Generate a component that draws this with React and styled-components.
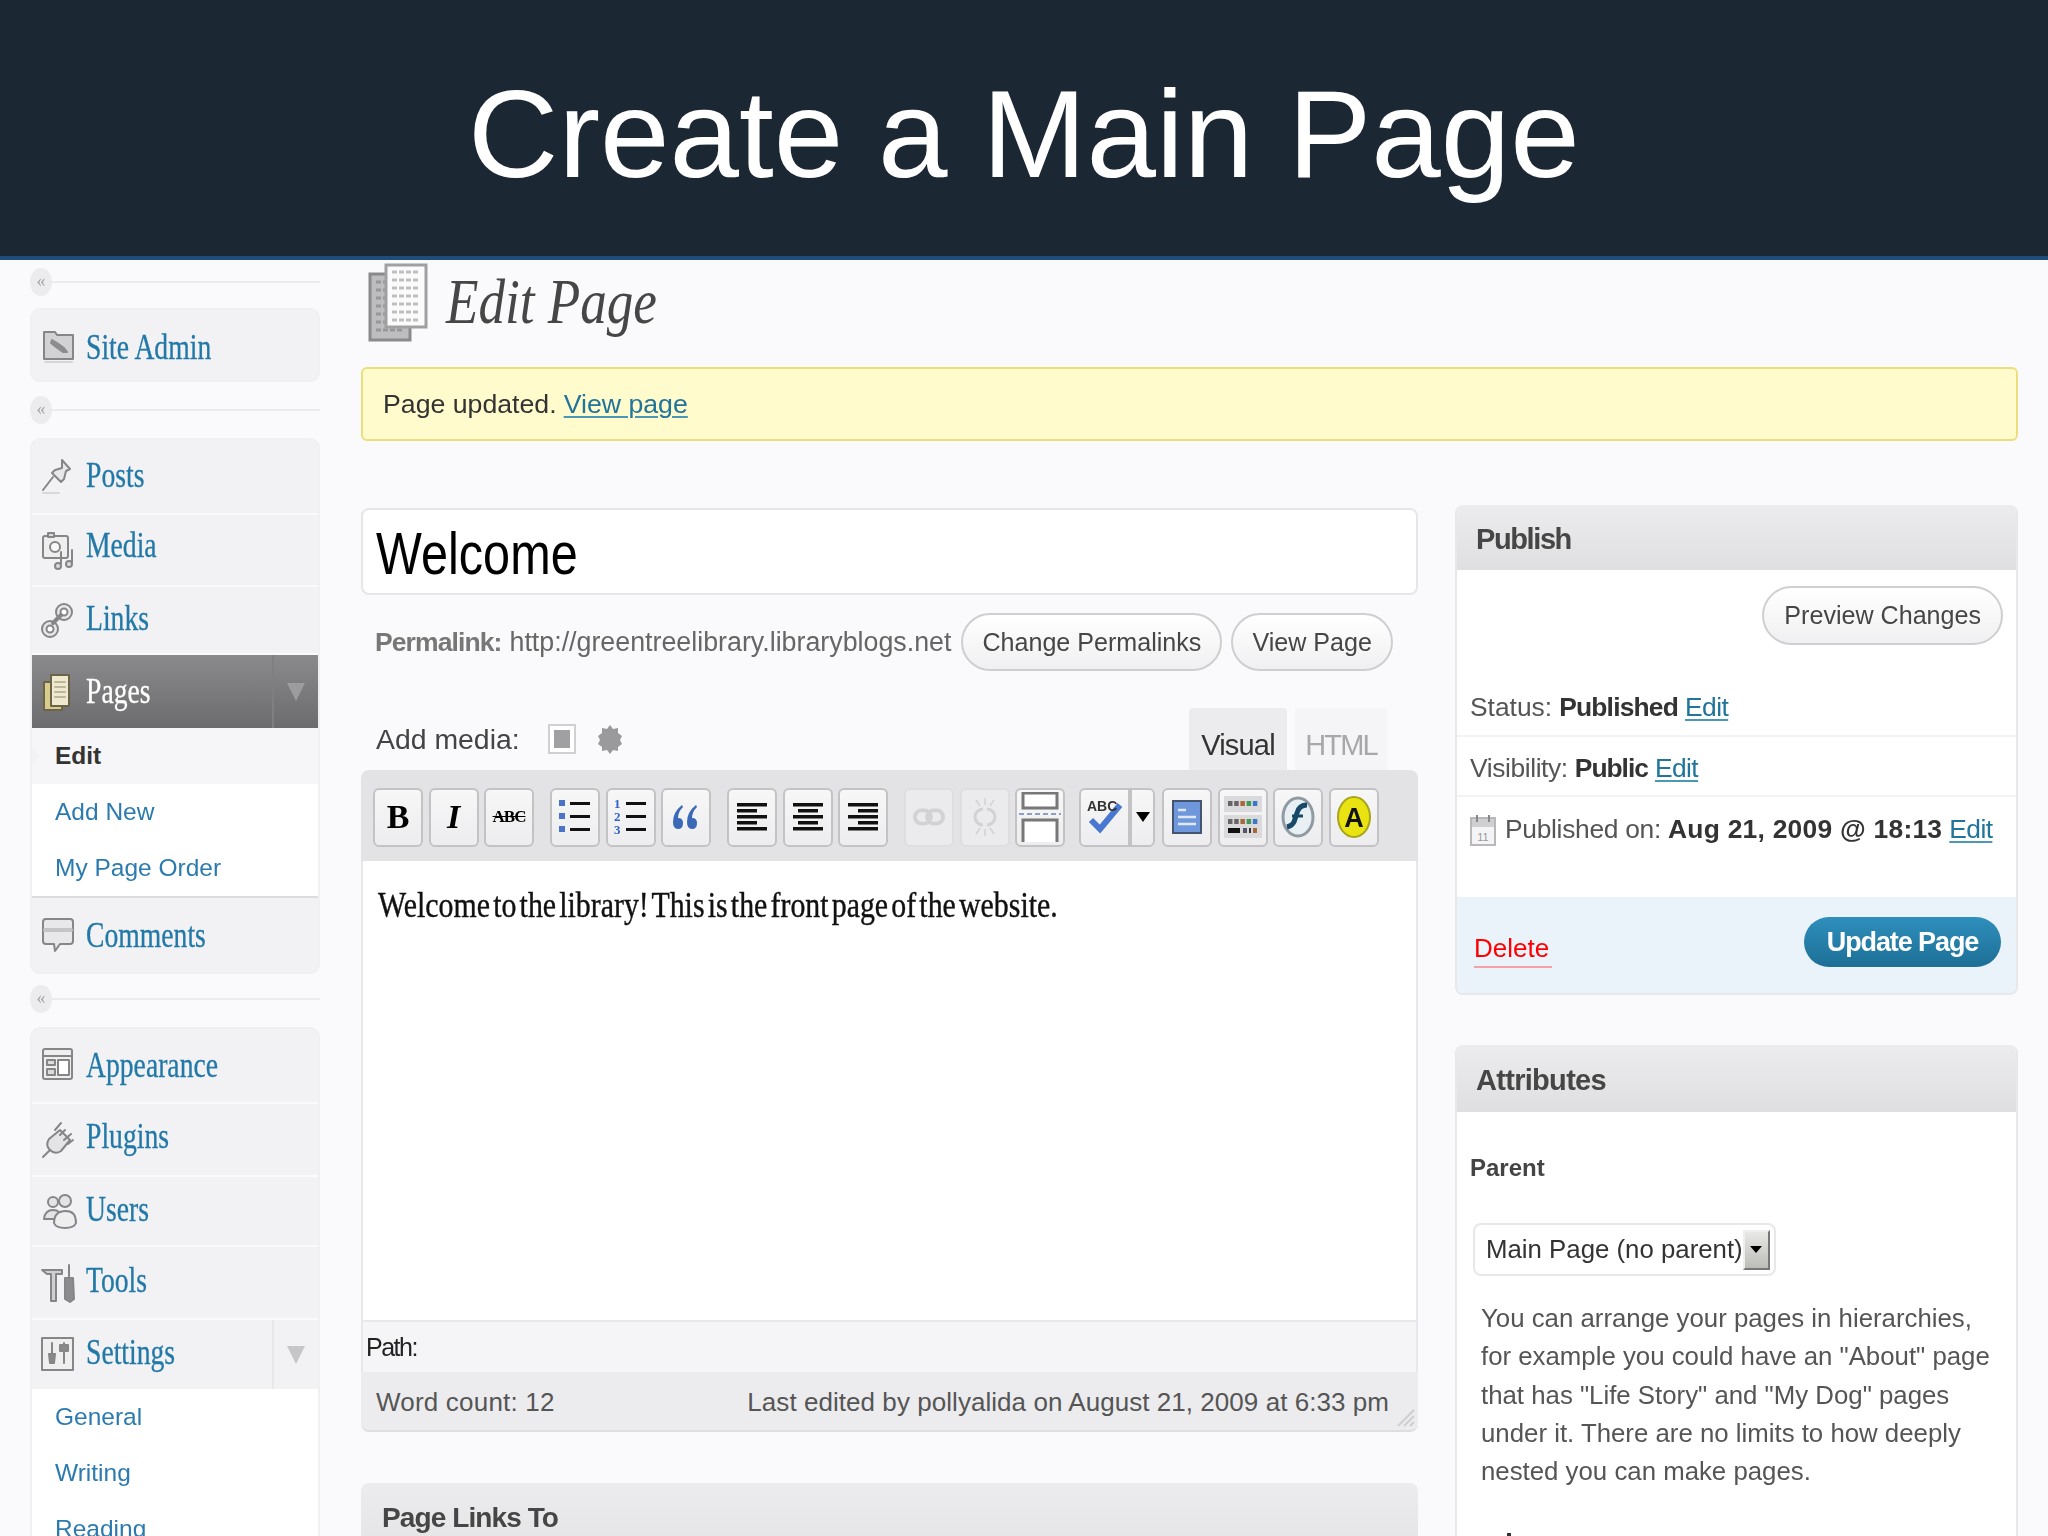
import React from "react";
import styled, { createGlobalStyle } from "styled-components";

const GlobalStyle = createGlobalStyle`
html, body {
    margin: 0;
    padding: 0;
    background: #fafafc;
}
* { box-sizing: border-box; }
`

const Slide = styled.div`
width: 2048px;
height: 1536px;
overflow: hidden;
display: flex;
flex-direction: column;
font-family: "Liberation Sans", Arial, sans-serif;
color: #333;
background: #fafafc;
`
const Banner = styled.header`
height: 260px;
flex: none;
display: flex;
justify-content: center;
align-items: flex-start;
padding-top: 62px;
background: #1b2733;
border-bottom: 4px solid #1f4d7a;
`
const BannerTitle = styled.h1`
margin: 0;
font-size: 125px;
line-height: 144px;
font-weight: 400;
color: #fff;
`
const Workspace = styled.div`
flex: 1;
display: flex;
min-height: 0;
filter: blur(0.55px);
`

// sidebar
const Sidebar = styled.nav`
width: 361px;
flex: none;
padding: 0 41px 0 30px;
`
const Fold = styled.div`
height: 44px;
margin: ${p => p.$top || 0}px 0 ${p => p.$bottom || 0}px;
display: flex;
align-items: center;
`
const FoldDot = styled.span`
width: 22px;
height: 28px;
flex: none;
border-radius: 50%;
background: #ececee;
color: #a5a5a5;
font: 18px/26px "Liberation Serif", serif;
text-align: center;
`
const FoldLine = styled.span`
flex: 1;
height: 2px;
background: #ececee;
`
const MenuGroup = styled.ul`
list-style: none;
margin: 0;
padding: 0;
border: 2px solid #f0f0f2;
border-radius: 10px;
background: #f2f2f4;
overflow: hidden;
`
const MenuRow = styled.li`
height: ${p => p.$h}px;
display: flex;
align-items: center;
padding-left: 8px;
border-top: ${p => (p.$first ? "none" : "2px solid #fafafb")};
background: ${p => (p.$active ? "linear-gradient(#8a8a8c, #6c6c6e)" : "transparent")};
`
const MenuIconBox = styled.span`
width: 46px;
height: 40px;
flex: none;
`
const MenuLabel = styled.span`
flex: 1;
display: block;
font: 35px/44px "Liberation Serif", serif;
-webkit-text-stroke: 0.3px;
color: ${p => (p.$active ? "#fff" : "#2279a8")};
transform: translateY(${p => p.$shift || 0}px) scaleX(0.79);
transform-origin: left center;
white-space: nowrap;
`
const MenuCaret = styled.span`
width: 46px;
align-self: stretch;
flex: none;
display: flex;
align-items: center;
justify-content: center;
border-left: 2px solid ${p => (p.$active ? "#7f7f81" : "#e8e8ea")};

&::after {
    content: '';
    border-left: 9px solid transparent;
    border-right: 9px solid transparent;
    border-top: 18px solid ${p => (p.$active ? "#9c9c9e" : "#c6c6c8")};
}
`
const SubMenu = styled.ul`
list-style: none;
margin: 0;
padding: 0;
background: #fff;
border-bottom: ${p => (p.$closed ? "2px solid #dcdcde" : "none")};
`
const SubItem = styled.li`
height: 56px;
display: flex;
align-items: center;
padding-left: 23px;
position: relative;
font-size: 24.5px;
font-weight: ${p => (p.$current ? 700 : 400)};
color: ${p => (p.$current ? "#333" : "#2b7bb0")};
background: ${p => (p.$current ? "#f6f6f8" : "transparent")};

${p => p.$current && `
&::before {
    content: '';
    position: absolute;
    left: 0;
    top: 20px;
    border-top: 8px solid transparent;
    border-bottom: 8px solid transparent;
    border-left: 8px solid #f2f2f4;
}`}
`

// main column
const Main = styled.main`
flex: 1;
padding-right: 30px;
min-width: 0;
`
const PageHead = styled.div`
height: 107px;
display: flex;
align-items: flex-start;
padding-left: 7px;
`
const PageIcon = styled.svg`
flex: none;
margin-top: 2px;
`
const PageTitle = styled.h2`
margin: 4px 0 0 18px;
font: italic 400 64px/76px "Liberation Serif", serif;
color: #464646;
transform: scaleX(0.83);
transform-origin: left center;
white-space: nowrap;
`
const Notice = styled.div`
height: 74px;
display: flex;
align-items: center;
padding-left: 20px;
font-size: 26.7px;
color: #333;
background: #fffbcc;
border: 2px solid #eadf7c;
border-radius: 6px;
`
const TextLink = styled.a`
color: #21759b;
text-decoration: underline;
text-decoration-color: ${p => p.$line || "#4a98b5"};
text-decoration-thickness: 2px;
text-underline-offset: 3px;
margin-left: ${p => (p.$gap ? "7px" : "0")};
`
const MetaEdit = styled(TextLink)`
letter-spacing: -0.6px;
`
const Columns = styled.div`
display: flex;
gap: 37px;
margin-top: 64px;
`
const LeftColumn = styled.div`
width: 1057px;
flex: none;
padding-top: 3px;
`
const RightColumn = styled.aside`
flex: 1;
min-width: 0;
`
const TitleField = styled.div`
height: 87px;
display: flex;
align-items: center;
padding: 5px 0 0 13px;
background: #fff;
border: 2px solid #e6e6e8;
border-radius: 8px;
`
const TitleText = styled.span`
display: block;
font-size: 60px;
line-height: 70px;
color: #000;
transform: scaleX(0.81);
transform-origin: left center;
`
const PermalinkRow = styled.div`
height: 58px;
margin-top: 18px;
display: flex;
align-items: center;
padding-left: 14px;
font-size: 26.8px;
color: #666;
white-space: nowrap;
`
const PermalinkLabel = styled.strong`
margin-right: 8px;
font-size: 26.5px;
letter-spacing: -0.9px;
color: #777;
`
const PillButton = styled.div`
height: ${p => p.$h || 58}px;
margin-left: ${p => p.$left || 0}px;
padding: 0 ${p => p.$pad || 19}px;
display: flex;
align-items: center;
flex: none;
font-size: 25.1px;
color: #464646;
background: linear-gradient(#fff, #f0f0f2);
border: 2px solid #cfcfd1;
border-radius: 30px;
`
const MediaRow = styled.div`
height: 62px;
margin-top: 37px;
display: flex;
align-items: center;
padding-left: 15px;
`
const MediaLabel = styled.span`
font-size: 28.4px;
color: #444;
margin-right: 28px;
`
const MediaImage = styled.span`
width: 28px;
height: 30px;
display: flex;
align-items: center;
justify-content: center;
background: #fff;
border: 2px solid #d0d0d2;

&::after {
    content: '';
    width: 16px;
    height: 18px;
    background: #a0a0a2;
}
`
const MediaGear = styled.svg`
margin-left: 20px;
`
const Tabs = styled.div`
margin-left: auto;
align-self: stretch;
display: flex;
align-items: flex-end;
padding: 0 31px 0 0;
gap: 8px;
`
const Tab = styled.span`
height: 62px;
width: ${p => p.$w}px;
display: flex;
align-items: flex-end;
justify-content: center;
padding-bottom: 8px;
font-size: 29px;
letter-spacing: ${p => (p.$on ? "-0.8px" : "-1.8px")};
color: ${p => (p.$on ? "#333" : "#a8a8aa")};
background: ${p => (p.$on ? "#ececee" : "#f5f5f7")};
border-radius: 4px 4px 0 0;
`
const Toolbar = styled.div`
height: 91px;
display: flex;
align-items: center;
padding: 3px 0 0 12px;
background: #e3e3e5;
border-radius: 8px 8px 0 0;
`
const ToolGroup = styled.div`
display: flex;
gap: 5.5px;
margin-right: ${p => p.$gap ?? 16}px;
`
const ToolButton = styled.span`
width: ${p => p.$w || 50}px;
height: 59px;
display: flex;
align-items: center;
justify-content: center;
background: ${p => (p.$off ? "#ebebed" : "linear-gradient(#f7f7f8, #ededef)")};
border: 2px solid ${p => (p.$off ? "#dedee0" : "#c3c3c5")};
border-radius: ${p => p.$radius || "6px"};
`
const SplitTool = styled.div`
display: flex;
margin-right: 7px;
`
const ToolLetter = styled.span`
font-family: "Liberation Serif", serif;
font-size: ${p => p.$size || 32}px;
font-weight: 700;
font-style: ${p => (p.$italic ? "italic" : "normal")};
text-decoration: ${p => (p.$strike ? "line-through" : "none")};
letter-spacing: ${p => p.$track || 0}px;
color: ${p => p.$color || "#000"};
`
const EditorArea = styled.div`
height: 459px;
padding: 23px 0 0 15px;
background: #fff;
border: solid #e8e8ea;
border-width: 0 2px;
`
const EditorText = styled.p`
margin: 0;
font: 35px/44px "Liberation Serif", serif;
-webkit-text-stroke: 0.4px;
word-spacing: -5px;
color: #111;
white-space: nowrap;
transform: scaleX(0.853);
transform-origin: left center;
`
const PathBar = styled.div`
height: 52px;
display: flex;
align-items: center;
padding-left: 3px;
font-size: 25px;
letter-spacing: -1.5px;
color: #222;
background: #f5f5f7;
border: solid #e8e8ea;
border-width: 2px 2px 0;
`
const StatusBar = styled.div`
height: 60px;
display: flex;
align-items: center;
justify-content: space-between;
padding: 3px 29px 0 15px;
font-size: 26px;
color: #555;
background: #ececee;
border-bottom: 2px solid #dedee0;
border-radius: 0 0 8px 8px;
position: relative;
`
const Grip = styled.svg`
position: absolute;
right: 2px;
bottom: 2px;
`
const StatusCount = styled.span`
letter-spacing: 0.2px;
`
const StatusEdited = styled.span`
letter-spacing: 0.05px;
`
const LinksBox = styled.div`
height: 90px;
margin-top: 51px;
padding: 19px 0 0 21px;
font-size: 28px;
font-weight: 700;
letter-spacing: -0.9px;
color: #464646;
background: linear-gradient(#ececee, #e2e2e4);
border-radius: 8px 8px 0 0;
`

// right column
const Panel = styled.section`
margin-bottom: ${p => p.$gap || 0}px;
min-height: ${p => p.$min || 0}px;
background: #fff;
border: solid #e8e8ea;
border-width: 0 2px 2px;
border-radius: 8px;
overflow: hidden;
`
const PanelHead = styled.h3`
height: ${p => p.$h}px;
margin: 0 -2px;
padding: 3px 0 0 21px;
display: flex;
align-items: center;
font-size: 29px;
font-weight: 700;
letter-spacing: ${p => p.$track ?? -0.7}px;
color: #464646;
background: linear-gradient(#ececee, #dfdfe1);
`
const PreviewRow = styled.div`
display: flex;
justify-content: flex-end;
padding: 16px 13px 0 0;
`
const MetaRow = styled.div`
height: ${p => p.$h}px;
display: flex;
align-items: ${p => p.$align || "center"};
padding: ${p => p.$pad || 0};
padding-left: 13px;
font-size: 26.4px;
color: #555;
white-space: nowrap;
border-bottom: ${p => (p.$line ? "2px solid #f3f3f5" : "none")};
`
const MetaName = styled.span`
letter-spacing: ${p => p.$track || 0}px;
`
const MetaValue = styled.strong`
margin: 0 7px 0 7px;
color: #333;
letter-spacing: ${p => p.$track || 0}px;
`
const CalendarIcon = styled.svg`
margin-right: 9px;
flex: none;
`
const PublishFoot = styled.div`
height: 96px;
display: flex;
justify-content: space-between;
padding: 20px 15px 0 17px;
background: #eaf2fa;
`
const DeleteLink = styled.a`
align-self: flex-start;
margin-top: 13px;
padding: 0 3px 0 0;
font-size: 26px;
line-height: 36px;
color: #f00;
border-bottom: 2px solid #f4a0a8;
`
const UpdateButton = styled.div`
width: 197px;
height: 50px;
display: flex;
align-items: center;
justify-content: center;
font-size: 27px;
font-weight: 700;
letter-spacing: -1.1px;
color: #fff;
background: linear-gradient(#2f8fbc, #1c6f96);
border-radius: 26px;
`
const FieldLabel = styled.div`
margin: 41px 0 0 13px;
font-size: 24px;
line-height: 30px;
font-weight: 700;
color: #444;
`
const SelectBox = styled.div`
width: 303px;
height: 53px;
margin: 40px 0 0 16px;
display: flex;
align-items: center;
justify-content: space-between;
padding: 0 5px 0 11px;
font-size: 25.8px;
color: #333;
background: #fff;
border: 2px solid #e8e8ea;
border-radius: 8px;
white-space: nowrap;
`
const SelectArrow = styled.span`
width: 27px;
height: 40px;
flex: none;
display: flex;
align-items: center;
justify-content: center;
background: linear-gradient(#e8e8e6, #bcbcb8);
border: 2px solid;
border-color: #eee #777 #777 #eee;

&::after {
    content: '';
    border-left: 6px solid transparent;
    border-right: 6px solid transparent;
    border-top: 7px solid #000;
}
`
const HelpText = styled.p`
margin: 23px 0 0 24px;
font-size: 25.8px;
line-height: 38.3px;
color: #555;
white-space: nowrap;
`
const Speck = styled.div`
width: 4px;
height: 3px;
margin: 43px 0 0 50px;
background: #333;
`

const ICON = { fill: "#dcdcde", stroke: "#868688", strokeWidth: 2, strokeLinejoin: "round", strokeLinecap: "round" };

// menu icons, hand drawn to follow the old wp-admin sprite
const MenuIcon = ({ name }) => {
    const art = {
        admin: <>
            <path d="M4 34V7h11l2 3h16v24z" fill="#d2d2d4" />
            <path d="M12 15l5 3 7 5 3 4-4 0-7-5-5-4z" fill="#8c8c8e" stroke="#8c8c8e" />
            <path d="M5 37h27" stroke="#d6d6d8" />
        </>,
        posts: <>
            <path d="M22 3l8 9-4 2-2 8-3 3-9-9 3-3 7-2z" fill="#e8e8ea" />
            <path d="M13 20L3 33" />
            <path d="M3 36h16" stroke="#d8d8da" />
        </>,
        media: <>
            <rect x="3" y="6" width="25" height="22" rx="2" fill="#eeeeef" />
            <rect x="8" y="3" width="6" height="4" />
            <circle cx="15" cy="17" r="5" fill="#f8f8f8" />
            <path d="M21 34V22M32 32V20" />
            <circle cx="18" cy="36" r="3" />
            <circle cx="29" cy="34" r="3" />
        </>,
        links: <>
            <circle cx="24" cy="12" r="8" fill="#e8e8ea" />
            <circle cx="24" cy="12" r="3.5" fill="#fff" />
            <circle cx="10" cy="29" r="8" fill="#e8e8ea" />
            <circle cx="10" cy="29" r="3.5" fill="#fff" />
            <path d="M13 23l8-8" strokeWidth="4" />
        </>,
        pages: <>
            <rect x="4" y="10" width="18" height="28" fill="#d8cc8e" stroke="#6b6446" />
            <rect x="11" y="3" width="18" height="31" fill="#efe9cf" stroke="#6b6446" />
            <path d="M15 10h10M15 15h10M15 20h10M15 25h10" stroke="#bdb69a" />
        </>,
        comments: <>
            <path d="M6 4h24q3 0 3 3v19q0 3-3 3H20l-5 7-1-7H6q-3 0-3-3V7q0-3 3-3z" fill="#e8e8ea" />
            <path d="M5 15h26" stroke="#c4c4c6" strokeWidth="4" />
        </>,
        appearance: <>
            <rect x="3" y="3" width="29" height="30" rx="2" fill="#efeff0" />
            <path d="M3 10h29" />
            <rect x="7" y="14" width="8" height="5" />
            <rect x="7" y="23" width="8" height="6" />
            <rect x="18" y="14" width="11" height="15" fill="#fff" />
        </>,
        plugins: <>
            <path d="M9 19l11-9 10 10-9 11q-6 4-11-1-5-5-1-11z" fill="#e4e4e6" />
            <path d="M15 10l6-7M20 15l5-5M24 20l7-6M28 24l5-4M10 30l-7 7" />
        </>,
        users: <>
            <circle cx="13" cy="11" r="5" fill="#e4e4e6" />
            <circle cx="25" cy="10" r="6" fill="#e4e4e6" />
            <path d="M4 28q1-9 9-9 8 0 9 9z" fill="#e4e4e6" />
            <path d="M14 32q0-12 12-12 10 0 10 12-2 5-11 5-9 0-11-5z" fill="#eeeeef" />
        </>,
        tools: <>
            <path d="M2 7h20v4h-6v27h-5V11H7z" fill="#d0d0d2" />
            <path d="M29 2v13M25 15h8l1 21-4 3-5-3z" fill="#8c8c8e" />
        </>,
        settings: <>
            <rect x="2" y="3" width="31" height="32" fill="#efeff0" />
            <path d="M12 8v10M24 8v3" />
            <path d="M9 19h6l-1 9h-4zM20 10h8v6h-8zM24 16v12" fill="#8a8a8c" />
        </>,
    };
    return (
        <MenuIconBox>
            <svg width="38" height="40" viewBox="0 0 38 40" {...ICON}>{art[name]}</svg>
        </MenuIconBox>
    );
};

const Row = ({ name, label, h, first, active, caret, shift }) => (
    <MenuRow $h={h} $first={first} $active={active}>
        <MenuIcon name={name} />
        <MenuLabel $active={active} $shift={shift}>{label}</MenuLabel>
        {caret && <MenuCaret $active={active} />}
    </MenuRow>
);

const Lines = ({ rows }) => (
    <svg width="34" height="34" viewBox="0 0 34 34">
        {rows.map(([x, w], i) => (
            <rect key={i} x={x} y={3 + i * 6} width={w} height="3.5" fill="#111" />
        ))}
    </svg>
);

const ListIcon = ({ numbered }) => (
    <svg width="34" height="40" viewBox="0 0 34 40">
        {[6, 19, 32].map((y, i) => (
            numbered
                ? <text key={y} x="0" y={y + 5} fontSize="13" fontWeight="700" fill="#2f62c4" fontFamily="Liberation Serif">{i + 1}</text>
                : <rect key={y} x="1" y={y - 3} width="6" height="6" fill="#4a74c8" />
        ))}
        {[6, 19, 32].map(y => <rect key={y} x="12" y={y - 1} width="20" height="3" fill="#111" />)}
    </svg>
);

const QuoteIcon = () => (
    <svg width="28" height="26" viewBox="0 0 28 26" fill="#3a69b8">
        <path d="M10 1Q1 8 1 18q0 7 5 7t5-6q0-5-5-5 0-6 5-11zM24 1q-9 7-9 17 0 7 5 7t5-6q0-5-5-5 0-6 5-11z" />
    </svg>
);

const LinkIcon = () => (
    <svg width="32" height="24" viewBox="0 0 34 24" fill="none" stroke="#d2d2d4" strokeWidth="4">
        <rect x="2" y="5" width="17" height="14" rx="7" />
        <rect x="15" y="5" width="17" height="14" rx="7" />
    </svg>
);

const UnlinkIcon = () => (
    <svg width="32" height="44" viewBox="0 0 32 44" fill="none" stroke="#d2d2d4" strokeWidth="3">
        <path d="M14 14a8 8 0 1 0 0 16M18 14a8 8 0 1 1 0 16" />
        <path d="M7 5l4 6M16 3v7M25 5l-4 6M7 39l4-6M16 41v-7M25 39l-4-6" strokeWidth="1.5" />
    </svg>
);

const PageBreakIcon = () => (
    <svg width="42" height="50" viewBox="0 0 42 50">
        <path d="M4 1h34v15H4z" fill="#fff" stroke="#777" strokeWidth="3" />
        <path d="M0 22h42" stroke="#8da0c4" strokeWidth="2" strokeDasharray="5 3" />
        <path d="M4 50V28h34v22" fill="#fff" stroke="#777" strokeWidth="3" />
    </svg>
);

const SpellIcon = () => (
    <svg width="38" height="36" viewBox="0 0 38 36">
        <path d="M5 21l9 9L34 6" fill="none" stroke="#4a78d0" strokeWidth="6" />
        <text x="1" y="12" fontSize="14" fontWeight="700" fill="#333" fontFamily="Liberation Sans">ABC</text>
    </svg>
);

const FullscreenIcon = () => (
    <svg width="30" height="34" viewBox="0 0 30 34">
        <rect x="1" y="1" width="28" height="32" fill="#6f97dc" stroke="#45556e" strokeWidth="2" />
        <path d="M6 10h8M6 17h18M6 24h18" stroke="#dfe8f8" strokeWidth="2.5" />
    </svg>
);

const SinkIcon = () => {
    const dots = ["#666", "#666", "#a8683a", "#3f9a5a", "#3a78c8"];
    return (
        <svg width="38" height="42" viewBox="0 0 38 42">
            <rect width="38" height="16" fill="#dadadc" />
            <rect y="19" width="38" height="23" fill="#dadadc" />
            {dots.map((c, i) => <rect key={i} x={4 + i * 6.2} y="5" width="4.5" height="5" fill={c} />)}
            {dots.map((c, i) => <rect key={i} x={4 + i * 6.2} y="23" width="4.5" height="5" fill={c} />)}
            <rect x="4" y="32" width="12" height="5" fill="#111" />
            <rect x="19" y="32" width="4" height="5" fill="#556" />
            <rect x="25" y="32" width="2" height="5" fill="#333" />
            <rect x="29" y="32" width="4" height="5" fill="#a8683a" />
        </svg>
    );
};

const FlashIcon = () => (
    <svg width="34" height="42" viewBox="0 0 34 42">
        <ellipse cx="17" cy="21" rx="15" ry="19" fill="#e8f0f4" stroke="#8f9aa2" strokeWidth="3" />
        <path d="M26 9q-8 0-10 8l-3 9q-2 4-7 5" fill="none" stroke="#174a68" strokeWidth="5" />
        <path d="M11 20h11" stroke="#174a68" strokeWidth="3" />
    </svg>
);

const AnchorIcon = () => (
    <svg width="34" height="42" viewBox="0 0 34 42">
        <ellipse cx="17" cy="21" rx="16" ry="20" fill="#e9e411" stroke="#a8a41c" strokeWidth="2" />
        <text x="17" y="31" textAnchor="middle" fontSize="27" fontWeight="700" fill="#111" fontFamily="Liberation Sans">A</text>
    </svg>
);

const FoldBar = ({ top, bottom }) => (
    <Fold $top={top} $bottom={bottom}>
        <FoldDot>«</FoldDot>
        <FoldLine />
    </Fold>
);

const App = () => {
    return (
        <>
            <GlobalStyle />
            <Slide>
                <Banner>
                    <BannerTitle>Create a Main Page</BannerTitle>
                </Banner>
                <Workspace>
                    <Sidebar>
                        <FoldBar bottom={4} />
                        <MenuGroup>
                            <Row name="admin" label="Site Admin" h={70} first shift={3} />
                        </MenuGroup>
                        <FoldBar top={6} bottom={6} />
                        <MenuGroup>
                            <Row name="posts" label="Posts" h={73} first shift={-1} />
                            <Row name="media" label="Media" h={72} shift={-4} />
                            <Row name="links" label="Links" h={68} shift={-1} />
                            <Row name="pages" label="Pages" h={75} active caret />
                            <SubMenu $closed>
                                <SubItem $current>Edit</SubItem>
                                <SubItem>Add New</SubItem>
                                <SubItem>My Page Order</SubItem>
                            </SubMenu>
                            <Row name="comments" label="Comments" h={74} first shift={1} />
                        </MenuGroup>
                        <FoldBar top={3} bottom={6} />
                        <MenuGroup>
                            <Row name="appearance" label="Appearance" h={73} first />
                            <Row name="plugins" label="Plugins" h={73} shift={-3} />
                            <Row name="users" label="Users" h={70} shift={-1} />
                            <Row name="tools" label="Tools" h={73} shift={-2} />
                            <Row name="settings" label="Settings" h={71} caret shift={-2} />
                            <SubMenu>
                                <SubItem>General</SubItem>
                                <SubItem>Writing</SubItem>
                                <SubItem>Reading</SubItem>
                            </SubMenu>
                        </MenuGroup>
                    </Sidebar>
                    <Main>
                        <PageHead>
                            <PageIcon width="60" height="82" viewBox="0 0 60 82">
                                <rect x="2" y="12" width="40" height="66" fill="#bdbdbf" stroke="#8a8a8c" strokeWidth="3" />
                                <path d="M8 20h28M8 28h28M8 36h28M8 44h28M8 52h28M8 60h28M8 68h28" stroke="#98989a" strokeWidth="3" strokeDasharray="5 2" />
                                <rect x="18" y="3" width="40" height="62" fill="#fbfbfb" stroke="#a0a0a2" strokeWidth="3" />
                                <path d="M24 10h28M24 18h28M24 26h28M24 34h28M24 42h28M24 50h28M24 58h28" stroke="#c0c0c2" strokeWidth="3" strokeDasharray="5 2" />
                            </PageIcon>
                            <PageTitle>Edit Page</PageTitle>
                        </PageHead>
                        <Notice>
                            Page updated.<TextLink $gap>View page</TextLink>
                        </Notice>
                        <Columns>
                            <LeftColumn>
                                <TitleField>
                                    <TitleText>Welcome</TitleText>
                                </TitleField>
                                <PermalinkRow>
                                    <PermalinkLabel>Permalink:</PermalinkLabel>
                                    http://greentreelibrary.libraryblogs.net
                                    <PillButton $left={10}>Change Permalinks</PillButton>
                                    <PillButton $left={9}>View Page</PillButton>
                                </PermalinkRow>
                                <MediaRow>
                                    <MediaLabel>Add media:</MediaLabel>
                                    <MediaImage />
                                    <MediaGear width="28" height="30" viewBox="0 0 26 30">
                                        <path d="M13 1l3 4 5-1 0 5 4 3-2 4 2 4-4 3 0 4-5-1-3 4-3-4-5 1 0-4-4-3 2-4-2-4 4-3 0-5 5 1z" fill="#9a9a9c" />
                                    </MediaGear>
                                    <Tabs>
                                        <Tab $on $w={98}>Visual</Tab>
                                        <Tab $w={92}>HTML</Tab>
                                    </Tabs>
                                </MediaRow>
                                <Toolbar>
                                    <ToolGroup>
                                        <ToolButton><ToolLetter $size={34}>B</ToolLetter></ToolButton>
                                        <ToolButton><ToolLetter $size={34} $italic>I</ToolLetter></ToolButton>
                                        <ToolButton><ToolLetter $size={17} $strike $track={-1}>ABC</ToolLetter></ToolButton>
                                    </ToolGroup>
                                    <ToolGroup>
                                        <ToolButton><ListIcon /></ToolButton>
                                        <ToolButton><ListIcon numbered /></ToolButton>
                                        <ToolButton><QuoteIcon /></ToolButton>
                                    </ToolGroup>
                                    <ToolGroup>
                                        <ToolButton><Lines rows={[[2, 30], [2, 20], [2, 30], [2, 20], [2, 30]]} /></ToolButton>
                                        <ToolButton><Lines rows={[[2, 30], [7, 20], [2, 30], [7, 20], [2, 30]]} /></ToolButton>
                                        <ToolButton><Lines rows={[[2, 30], [12, 20], [2, 30], [12, 20], [2, 30]]} /></ToolButton>
                                    </ToolGroup>
                                    <ToolGroup $gap={14}>
                                        <ToolButton $off><LinkIcon /></ToolButton>
                                        <ToolButton $off><UnlinkIcon /></ToolButton>
                                        <ToolButton><PageBreakIcon /></ToolButton>
                                    </ToolGroup>
                                    <SplitTool>
                                        <ToolButton $w={51} $radius="6px 0 0 6px"><SpellIcon /></ToolButton>
                                        <ToolButton $w={25} $radius="0 6px 6px 0">
                                            <svg width="14" height="10" viewBox="0 0 14 10"><path d="M0 0h14L7 10z" fill="#000" /></svg>
                                        </ToolButton>
                                    </SplitTool>
                                    <ToolGroup $gap={0}>
                                        <ToolButton><FullscreenIcon /></ToolButton>
                                        <ToolButton><SinkIcon /></ToolButton>
                                        <ToolButton><FlashIcon /></ToolButton>
                                        <ToolButton><AnchorIcon /></ToolButton>
                                    </ToolGroup>
                                </Toolbar>
                                <EditorArea>
                                    <EditorText>Welcome to the library! This is the front page of the website.</EditorText>
                                </EditorArea>
                                <PathBar>Path:</PathBar>
                                <StatusBar>
                                    <StatusCount>Word count: 12</StatusCount>
                                    <StatusEdited>Last edited by pollyalida on August 21, 2009 at 6:33 pm</StatusEdited>
                                    <Grip width="22" height="22" viewBox="0 0 22 22" stroke="#cfcfd1" strokeWidth="2">
                                        <path d="M20 4L4 20M20 10L10 20M20 16l-4 4" />
                                    </Grip>
                                </StatusBar>
                                <LinksBox>Page Links To</LinksBox>
                            </LeftColumn>
                            <RightColumn>
                                <Panel $gap={50}>
                                    <PanelHead $h={65} $track={-1.4}>Publish</PanelHead>
                                    <PreviewRow>
                                        <PillButton $h={59} $pad={20}>Preview Changes</PillButton>
                                    </PreviewRow>
                                    <MetaRow $h={92} $align="flex-end" $pad="0 0 12px" $line>
                                        Status:<MetaValue $track={-0.8}>Published</MetaValue><MetaEdit>Edit</MetaEdit>
                                    </MetaRow>
                                    <MetaRow $h={60} $pad="5px 0 0" $line>
                                        <MetaName $track={-0.4}>Visibility:</MetaName><MetaValue $track={-1}>Public</MetaValue><MetaEdit>Edit</MetaEdit>
                                    </MetaRow>
                                    <MetaRow $h={100} $align="flex-start" $pad="17px 0 0">
                                        <CalendarIcon width="26" height="32" viewBox="0 0 26 32">
                                            <rect x="1" y="4" width="24" height="27" fill="#f4f4f6" stroke="#b8b8ba" strokeWidth="2" />
                                            <rect x="2" y="5" width="22" height="8" fill="#cfcfd1" />
                                            <path d="M7 1v7M19 1v7" stroke="#888" strokeWidth="2" />
                                            <text x="13" y="27" textAnchor="middle" fontSize="11" fill="#999" fontFamily="Liberation Sans">11</text>
                                        </CalendarIcon>
                                        <MetaName $track={-0.3}>Published on:</MetaName><MetaValue $track={0.25}>Aug 21, 2009 @ 18:13</MetaValue><MetaEdit>Edit</MetaEdit>
                                    </MetaRow>
                                    <PublishFoot>
                                        <DeleteLink>Delete</DeleteLink>
                                        <UpdateButton>Update Page</UpdateButton>
                                    </PublishFoot>
                                </Panel>
                                <Panel $min={600}>
                                    <PanelHead $h={67}>Attributes</PanelHead>
                                    <FieldLabel>Parent</FieldLabel>
                                    <SelectBox>
                                        Main Page (no parent)
                                        <SelectArrow />
                                    </SelectBox>
                                    <HelpText>
                                        You can arrange your pages in hierarchies,<br />
                                        for example you could have an "About" page<br />
                                        that has "Life Story" and "My Dog" pages<br />
                                        under it. There are no limits to how deeply<br />
                                        nested you can make pages.
                                    </HelpText>
                                    <Speck />
                                </Panel>
                            </RightColumn>
                        </Columns>
                    </Main>
                </Workspace>
            </Slide>
        </>
    );
};

export default App;
